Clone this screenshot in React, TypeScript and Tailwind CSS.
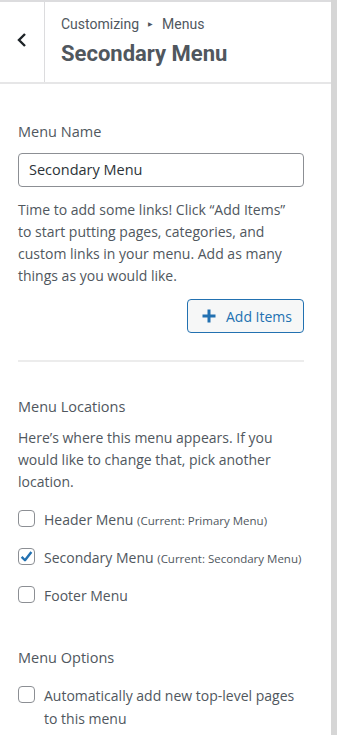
import React from "react";

function Box({ checked }: { checked?: boolean }) {
  return (
    <span className="mt-[2px] flex h-[17px] w-[17px] shrink-0 items-center justify-center rounded-[4px] border border-[#8c8f94] bg-white">
      {checked && (
        <svg width="15" height="15" viewBox="0 0 20 20">
          <path d="M3.5 10.5 L8 15 L16.5 4" fill="none" stroke="#2271b1" strokeWidth="3.2" strokeLinejoin="round" />
        </svg>
      )}
    </span>
  );
}

export default function App() {
  return (
    <div className="flex h-[742px] w-[337px] bg-white" style={{ fontFamily: '"Open Sans", sans-serif' }}>
      <div className="flex w-[331px] flex-col border-t-2 border-[#dcdcde]">
        <div className="flex h-[82px] border-b-2 border-[#e6e6e7]">
          <div className="flex w-[45px] shrink-0 items-center justify-center border-r border-[#dcdcde] pb-[4px]">
            <svg width="12" height="16" viewBox="0 0 12 16">
              <path d="M9 2 L3 8 L9 14" fill="none" stroke="#1d2327" strokeWidth="2.4" />
            </svg>
          </div>
          <div className="flex flex-col pl-[16px] pt-[12px]" style={{ fontFamily: 'Roboto, sans-serif' }}>
            <div className="flex items-center text-[14px] leading-[20px] text-[#50575e]">
              Customizing
              <span className="mx-[9px] text-[6px]">▶</span>
              Menus
            </div>
            <div className="mt-[6px] text-[22px] font-bold leading-[28px] text-[#50575e]">Secondary Menu</div>
          </div>
        </div>
        <div className="flex flex-col px-[18px] pt-[37px] text-[14px] text-[#50575e]">
          <div className="text-[14.5px] leading-[22px]">Menu Name</div>
          <div className="mt-[10px] flex h-[34px] w-[286px] items-center rounded-[4px] border border-[#8c8f94] px-[10px] text-[14.5px] text-[#2c3338]">
            Secondary Menu
          </div>
          <p className="mt-[12px] w-[272px] text-[14px] leading-[22px]">
            Time to add some links! Click “Add Items” to start putting pages, categories, and custom links in your menu. Add as many things as you would like.
          </p>
          <div className="mt-[12px] flex justify-end pr-[9px]">
            <div className="flex h-[34px] items-center gap-[9px] rounded-[4px] border border-[#2271b1] bg-[#f6f7f7] pl-[13px] pr-[11px] text-[14px] text-[#2271b1]">
              <svg width="16" height="16" viewBox="0 0 16 16">
                <path d="M8 1.5 V14.5 M1.5 8 H14.5" stroke="#2271b1" strokeWidth="3" />
              </svg>
              Add Items
            </div>
          </div>
          <div className="mt-[27px] h-[2px] w-[286px] bg-[#ececec]" />
          <div className="mt-[34px] text-[14.5px] leading-[22px]">Menu Locations</div>
          <p className="mt-[9px] w-[290px] text-[14px] leading-[22px]">
            Here’s where this menu appears. If you would like to change that, pick another location.
          </p>
          <div className="mt-[15px] flex flex-col gap-[14px]">
            <div className="flex items-start gap-[9px] leading-[23px]">
              <Box />
              <span>
                Header Menu <span className="text-[11.5px]">(Current: Primary Menu)</span>
              </span>
            </div>
            <div className="flex items-start gap-[9px] leading-[23px]">
              <Box checked />
              <span className="whitespace-nowrap">
                Secondary Menu <span className="text-[11.5px]">(Current: Secondary Menu)</span>
              </span>
            </div>
            <div className="flex items-start gap-[9px] leading-[23px]">
              <Box />
              <span>Footer Menu</span>
            </div>
          </div>
          <div className="mt-[40px] text-[14.5px] leading-[22px]">Menu Options</div>
          <div className="mt-[15px] flex items-start gap-[9px] leading-[23px]">
            <Box />
            <span className="w-[260px]">Automatically add new top-level pages to this menu</span>
          </div>
        </div>
      </div>
      <div className="h-[735px] w-[6px] bg-[#d6d6d6]" />
    </div>
  );
}
